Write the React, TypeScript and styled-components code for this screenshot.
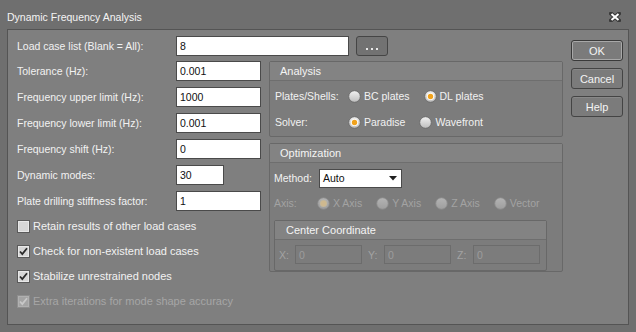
import React from 'react'
import styled, { createGlobalStyle } from 'styled-components'

const GlobalStyle = createGlobalStyle`
  html, body {
    margin: 0;
    padding: 0;
    background: #6f6f6f;
  }
  body {
    font-family: "Liberation Sans", Arial, sans-serif;
    font-size: 10.5px;
    color: #f2f2f2;
  }
`

const Window = styled.div`
  width: 636px;
  height: 332px;
  background: #6f6f6f;
  display: flex;
  flex-direction: column;
  overflow: hidden;
`

const TitleBar = styled.div`
  height: 29px;
  box-sizing: border-box;
  padding: 5px 15px 0 7px;
  display: flex;
  align-items: center;
  justify-content: space-between;
  font-size: 10.5px;
  color: #f4f4f4;
`

const Client = styled.div`
  height: 296px;
  margin: 0 7px 7px;
  box-sizing: border-box;
  border: 1px solid #545454;
  background: #7f7f7f;
  padding: 6px 5px 0 9px;
  display: flex;
  gap: 8px;
`

const Main = styled.div`
  width: 546px;
  display: flex;
  flex-direction: column;
  gap: 5px;
`

const Columns = styled.div`
  display: flex;
  gap: 8px;
`

const LeftCol = styled.div`
  width: 244px;
  display: flex;
  flex-direction: column;
`

const RightCol = styled.div`
  width: 294px;
  display: flex;
  flex-direction: column;
  gap: 6px;
`

const Fields = styled.div`
  display: flex;
  flex-direction: column;
  gap: 6px;
`

const Checks = styled.div`
  display: flex;
  flex-direction: column;
  gap: 5px;
  margin-top: 5px;
`

const Row = styled.div`
  height: 20px;
  display: flex;
  align-items: center;
`

const FieldLabel = styled.span<{ $w: number; $disabled?: boolean }>`
  width: ${(p) => p.$w}px;
  flex: none;
  white-space: nowrap;
  color: ${(p) => (p.$disabled ? '#a3a3a3' : '#f2f2f2')};
`

const TextBox = styled.div<{ $w: number; $disabled?: boolean; $h?: number }>`
  width: ${(p) => p.$w}px;
  height: ${(p) => p.$h ?? 20}px;
  box-sizing: border-box;
  border: 1px solid ${(p) => (p.$disabled ? '#6c6c6c' : '#4a4a4a')};
  background: ${(p) => (p.$disabled ? '#7c7c7c' : '#ffffff')};
  color: ${(p) => (p.$disabled ? '#9c9c9c' : '#101010')};
  padding: 0 3px;
  display: flex;
  align-items: center;
  flex: none;
`

const DotsButton = styled.div`
  width: 32px;
  height: 20px;
  margin-left: 7px;
  box-sizing: border-box;
  border: 1px solid #454545;
  border-radius: 3px;
  background: #727272;
  display: flex;
  align-items: center;
  justify-content: center;
  gap: 3px;
  padding-top: 5px;
`

const Dot = styled.span`
  width: 2px;
  height: 2px;
  background: #e8e8e8;
`

const Group = styled.div<{ $h: number; $w?: number }>`
  height: ${(p) => p.$h}px;
  width: ${(p) => (p.$w ? `${p.$w}px` : 'auto')};
  box-sizing: border-box;
  border: 1px solid #686868;
  border-radius: 2px;
  background: #7c7c7c;
  display: flex;
  flex-direction: column;
`

const GroupHeader = styled.div<{ $pad: number }>`
  height: 19px;
  flex: none;
  box-sizing: border-box;
  border-bottom: 1px solid #6e6e6e;
  background: #838383;
  padding-left: ${(p) => p.$pad}px;
  display: flex;
  align-items: center;
  font-size: 11px;
  color: #f4f4f4;
`

const GroupBody = styled.div<{ $pad: string; $gap: number }>`
  padding: ${(p) => p.$pad};
  display: flex;
  flex-direction: column;
  gap: ${(p) => p.$gap}px;
`

const Options = styled.div`
  display: flex;
  align-items: center;
  gap: 14px;
`

const Option = styled.span<{ $disabled?: boolean }>`
  display: flex;
  align-items: center;
  gap: 3px;
  white-space: nowrap;
  color: ${(p) => (p.$disabled ? '#a3a3a3' : '#f2f2f2')};
`

const CheckItem = styled.div<{ $disabled?: boolean }>`
  height: 20px;
  display: flex;
  align-items: center;
  gap: 3px;
  font-size: 11px;
  color: ${(p) => (p.$disabled ? '#a6a6a6' : '#f2f2f2')};
`

const Select = styled.div`
  width: 83px;
  height: 19px;
  box-sizing: border-box;
  border: 1px solid #4a4a4a;
  background: #ffffff;
  color: #101010;
  padding: 0 4px 0 3px;
  display: flex;
  align-items: center;
  justify-content: space-between;
`

const SubGroupWrap = styled.div`
  margin-top: 2px;
`

const CoordRow = styled.div`
  height: 19px;
  display: flex;
  align-items: center;
  gap: 6px;
`

const CoordField = styled.div`
  display: flex;
  align-items: center;
`

const ButtonCol = styled.div`
  width: 52px;
  margin-top: 4px;
  display: flex;
  flex-direction: column;
  gap: 7px;
`

const DialogButton = styled.div<{ $default?: boolean }>`
  height: 21px;
  box-sizing: border-box;
  border: 1px solid ${(p) => (p.$default ? '#3a3a3a' : '#444444')};
  box-shadow: ${(p) => (p.$default ? 'inset 0 0 0 1px #a8a8a8' : 'inset 0 1px 0 #888')};
  border-radius: 3px;
  background: #7b7b7b;
  display: flex;
  align-items: center;
  justify-content: center;
  font-size: 11px;
  color: #f4f4f4;
`

const CloseIcon = () => (
  <svg width="12" height="10" viewBox="0 0 12 10">
    <path d="M2 1.5 L10 8.5 M10 1.5 L2 8.5" stroke="#3a3a3a" strokeWidth="4" strokeLinecap="square" />
    <path d="M2.5 2 L9.5 8 M9.5 2 L2.5 8" stroke="#ffffff" strokeWidth="2" />
  </svg>
)

const Radio = ({ checked, disabled }: { checked?: boolean; disabled?: boolean }) => {
  const id = `${checked ? 'c' : 'u'}${disabled ? 'd' : 'e'}`
  return (
    <svg width="13" height="13" viewBox="0 0 13 13">
      <defs>
        <linearGradient id={`rg${id}`} x1="0" y1="0" x2="0" y2="1">
          <stop offset="0" stopColor={disabled ? '#b4b4b4' : '#f2f2f2'} />
          <stop offset="1" stopColor={disabled ? '#9e9e9e' : '#bdbdbd'} />
        </linearGradient>
      </defs>
      <circle cx="6.5" cy="6.5" r="5.8" fill={`url(#rg${id})`} stroke={disabled ? '#8a8a8a' : '#6a6a6a'} strokeWidth="0.9" />
      {checked && (
        <>
          <circle cx="6.5" cy="6.5" r="3.6" fill={disabled ? '#c4b89c' : '#ffffff'} />
          <circle cx="6.5" cy="6.5" r="2.7" fill={disabled ? '#cfb98f' : '#f0a21c'} />
        </>
      )}
    </svg>
  )
}

const Checkbox = ({ checked, disabled }: { checked?: boolean; disabled?: boolean }) => (
  <svg width="13" height="13" viewBox="0 0 13 13">
    <rect
      x="0.5"
      y="0.5"
      width="12"
      height="12"
      fill={disabled ? '#a4a4a4' : '#d6d6d6'}
      stroke={disabled ? '#8e8e8e' : '#5a5a5a'}
    />
    <rect x="1.5" y="1.5" width="10" height="10" fill="none" stroke={disabled ? '#b0b0b0' : '#e8e8e8'} />
    {checked && (
      <path
        d="M3 6.5 L5.3 9 L10 3.2"
        fill="none"
        stroke={disabled ? '#c8c8c8' : '#2a2a2a'}
        strokeWidth="1.8"
      />
    )}
  </svg>
)

const Arrow = () => (
  <svg width="8" height="5" viewBox="0 0 8 5">
    <path d="M0 0 H8 L4 4.5 Z" fill="#202020" />
  </svg>
)

const fields = [
  { label: 'Tolerance (Hz):', value: '0.001', w: 85 },
  { label: 'Frequency upper limit (Hz):', value: '1000', w: 85 },
  { label: 'Frequency lower limit (Hz):', value: '0.001', w: 85 },
  { label: 'Frequency shift (Hz):', value: '0', w: 85 },
  { label: 'Dynamic modes:', value: '30', w: 48 },
  { label: 'Plate drilling stiffness factor:', value: '1', w: 85 },
]

const checks = [
  { label: 'Retain results of other load cases', checked: false },
  { label: 'Check for non-existent load cases', checked: true },
  { label: 'Stabilize unrestrained nodes', checked: true },
  { label: 'Extra iterations for mode shape accuracy', checked: true, disabled: true },
]

const App: React.FC = () => {
  return (
    <Window>
      <GlobalStyle />
      <TitleBar>
        <span>Dynamic Frequency Analysis</span>
        <CloseIcon />
      </TitleBar>
      <Client>
        <Main>
          <Row>
            <FieldLabel $w={159}>Load case list (Blank = All):</FieldLabel>
            <TextBox $w={173}>8</TextBox>
            <DotsButton>
              <Dot />
              <Dot />
              <Dot />
            </DotsButton>
          </Row>
          <Columns>
            <LeftCol>
              <Fields>
                {fields.map((f) => (
                  <Row key={f.label}>
                    <FieldLabel $w={159}>{f.label}</FieldLabel>
                    <TextBox $w={f.w}>{f.value}</TextBox>
                  </Row>
                ))}
              </Fields>
              <Checks>
                {checks.map((c) => (
                  <CheckItem key={c.label} $disabled={c.disabled}>
                    <Checkbox checked={c.checked} disabled={c.disabled} />
                    {c.label}
                  </CheckItem>
                ))}
              </Checks>
            </LeftCol>
            <RightCol>
              <Group $h={76}>
                <GroupHeader $pad={10}>Analysis</GroupHeader>
                <GroupBody $pad="5px 0 0 5px" $gap={6}>
                  <Row>
                    <FieldLabel $w={73}>Plates/Shells:</FieldLabel>
                    <Options>
                      <Option>
                        <Radio />
                        BC plates
                      </Option>
                      <Option>
                        <Radio checked />
                        DL plates
                      </Option>
                    </Options>
                  </Row>
                  <Row>
                    <FieldLabel $w={73}>Solver:</FieldLabel>
                    <Options>
                      <Option>
                        <Radio checked />
                        Paradise
                      </Option>
                      <Option>
                        <Radio />
                        Wavefront
                      </Option>
                    </Options>
                  </Row>
                </GroupBody>
              </Group>
              <Group $h={129}>
                <GroupHeader $pad={10}>Optimization</GroupHeader>
                <GroupBody $pad="5px 0 0 4px" $gap={5}>
                  <Row>
                    <FieldLabel $w={45}>Method:</FieldLabel>
                    <Select>
                      Auto
                      <Arrow />
                    </Select>
                  </Row>
                  <Row>
                    <FieldLabel $w={43} $disabled>
                      Axis:
                    </FieldLabel>
                    <Options>
                      <Option $disabled>
                        <Radio checked disabled />
                        X Axis
                      </Option>
                      <Option $disabled>
                        <Radio disabled />
                        Y Axis
                      </Option>
                      <Option $disabled>
                        <Radio disabled />
                        Z Axis
                      </Option>
                      <Option $disabled>
                        <Radio disabled />
                        Vector
                      </Option>
                    </Options>
                  </Row>
                  <SubGroupWrap>
                    <Group $h={51} $w={273}>
                      <GroupHeader $pad={11}>Center Coordinate</GroupHeader>
                      <GroupBody $pad="5px 0 0 4px" $gap={0}>
                        <CoordRow>
                          {['X:', 'Y:', 'Z:'].map((axis) => (
                            <CoordField key={axis}>
                              <FieldLabel $w={16} $disabled>
                                {axis}
                              </FieldLabel>
                              <TextBox $w={67} $h={19} $disabled>
                                0
                              </TextBox>
                            </CoordField>
                          ))}
                        </CoordRow>
                      </GroupBody>
                    </Group>
                  </SubGroupWrap>
                </GroupBody>
              </Group>
            </RightCol>
          </Columns>
        </Main>
        <ButtonCol>
          <DialogButton $default>OK</DialogButton>
          <DialogButton>Cancel</DialogButton>
          <DialogButton>Help</DialogButton>
        </ButtonCol>
      </Client>
    </Window>
  )
}

export default App
